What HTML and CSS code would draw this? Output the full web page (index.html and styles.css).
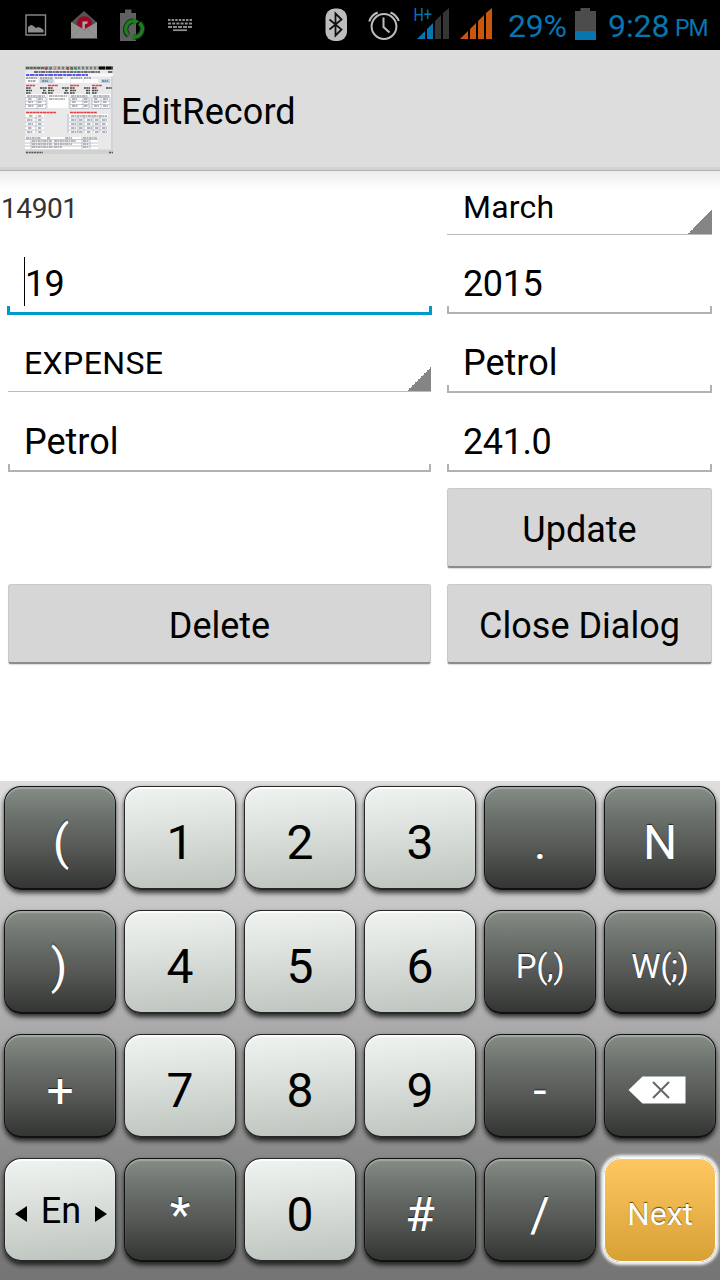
FILE: index.html
```
<!DOCTYPE html>
<html lang="en">
<head>
<meta charset="utf-8">
<title>EditRecord</title>
<link rel="stylesheet" href="styles.css">
</head>
<body>
<div class="screen">
  <header class="status">
    <svg class="status-icons" width="504" height="50" viewBox="0 0 504 50">
      <rect x="26" y="15" width="19.5" height="20" fill="none" stroke="#8c8c8c" stroke-width="1.4"/>
      <path d="M28 32.500v-5.500l2-1.500 2-.5 4 3 2-1 3 1 2.500 2v2.500z" fill="#8c8c8c"/>
      <path d="M71 22.500L84 11l13 11.500v8H71z" fill="#555"/>
      <circle cx="84.500" cy="24" r="7.800" fill="#9c0824"/>
      <path d="M83.600 29v-7.500M83.800 24.500q.2-2.300 3.700-2" fill="none" stroke="#aaa" stroke-width="2.400"/>
      <path d="M71 22l13 7.500L97 22v16.500H71z" fill="#929292"/>
      <path d="M71 38.500l10-11M97 38.500l-10-11" stroke="#858585" stroke-width=".8"/>
      <path d="M120 13h5V9.500h6.500V13h4.500v28h-16z" fill="#606060"/>
      <path d="M128.500 35.500a8.300 8.300 0 0 1 5.500-14.500M139.500 22.500a8.300 8.300 0 0 1-6 14.500" fill="none" stroke="#1b2a1b" stroke-width="5.400"/>
      <path d="M128.500 35a8 8 0 0 1 5.500-14M139.500 23a8 8 0 0 1-6 14" fill="none" stroke="#1d7d1f" stroke-width="3.400"/>
      <path d="M132.500 17.500l7 4-6 3.500zM136 33.500l-6 4 5 2.500z" fill="#1d7d1f"/>
      <g stroke="#8c8c8c" stroke-width="1.800" fill="none">
        <path d="M168 20h24" stroke-dasharray="2.500 1.100"/>
        <path d="M168 23.500h24" stroke-dasharray="3 1.200"/>
        <path d="M168 27h24" stroke-dasharray="4 1"/>
        <path d="M173 30.200h14"/>
      </g>
      <rect x="325.500" y="8.500" width="21.500" height="32.500" rx="9" fill="#bdbdbd"/>
      <path d="M329.500 19.500l12 10-6 6V13.500l6 6-12 10" fill="none" stroke="#111" stroke-width="1.800"/>
      <g fill="none" stroke="#bdbdbd" stroke-width="2">
        <circle cx="384" cy="26.500" r="12.400"/>
        <path d="M383.500 17.500v9.500l6 5.500"/>
        <path d="M369.200 21.500q2-6.500 8.500-9M390.500 12.500q6 2.500 8.300 8.500"/>
      </g>
      <text x="413.500" y="21" class="network" textLength="18.500" lengthAdjust="spacingAndGlyphs">H+</text>
      <path d="M417 39l8-8v8zM427 29l6-6v16h-6z" fill="#0776b0"/>
      <path d="M435 21l6-6v24h-6zM443 13l6-5v31h-6z" fill="#353535"/>
      <path d="M460 39l8-8v8zM470 29l6-6v16h-6zM478 21l6-6v24h-6zM486 13l6-5v31h-6z" fill="#c9560c"/>
    </svg>
    <span class="percent">29%</span>
    <svg class="battery" width="21" height="33" viewBox="0 0 21 33">
      <path d="M0 3h5.500V0h9.500v3h6v29H0z" fill="#4c4c4c"/>
      <path d="M0 23h21v9H0z" fill="#0776b0"/>
    </svg>
    <span class="clock">9:28</span><span class="meridiem">PM</span>
  </header>

  <div class="action-bar">
    <svg class="app-icon" width="88" height="88" viewBox="0 0 88 88">
      <rect width="88" height="88" fill="#e9e9e9"/>
      <rect width="88" height="4" fill="#b9bcb4"/>
      <path d="M1 2h19" stroke="#444" stroke-width="1.500" stroke-dasharray="3 .7"/>
      <path d="M21 2h53" stroke="#777" stroke-width="2.500" stroke-dasharray="2 2"/>
      <path d="M21 1v3M43 1v3" stroke="#d22" stroke-width="1.500"/>
      <path d="M25 1v3M51 1v3" stroke="#28c" stroke-width="1.500"/>
      <path d="M30 1v3" stroke="#e83" stroke-width="2"/><path d="M47 1v3" stroke="#292" stroke-width="2"/>
      <path d="M74 2h14" stroke="#050505" stroke-width="3" stroke-dasharray="6 .7"/>
      <path d="M9 6h66M83 6h5" stroke="#444" stroke-width="1.300" stroke-dasharray="4 .6 2 .5"/>
      <path d="M0 7.500h88v3H0z" fill="#f8f8ff"/>
      <path d="M1 9h62" stroke="#22e" stroke-width="1.600" stroke-dasharray="3 .6 5 .7"/>
      <path d="M1 12h11M15 12h13M30 12h8M46 12h11M59 12h7" stroke="#666" stroke-width="1" stroke-dasharray="2 .5"/>
      <path d="M1 13h12v4H1zM30 13h15v4H30zM46 13h12v4H46zM59 13h14v4H59z" fill="#fff"/>
      <path d="M15 13h13v4H15zM76 13h9v4h-9z" fill="#bdd0df"/>
      <path d="M3 15h8M17 15h6M77 15h6" stroke="#456" stroke-width="1.200" stroke-dasharray="2 .5"/>
      <g fill="#fff"><path d="M1 28h20v15H1zM23 28h20v14H23zM45 28h19v14H45zM67 28h19v14H67zM1 48h18v19H1zM44 48h39v19H44zM0 71h73v12H0z"/></g>
      <path d="M1 19.500h9M23 19.500h10M45 19.500h9M67 19.500h10M1 46.500h30M45 46.500h27" stroke="#e64040" stroke-width="1.300" stroke-dasharray="3 .4"/>
      <path d="M1 22h5M15 22h7M23 22h5M37 22h7M45 22h5M59 22h6M67 22h5M81 22h6M1 24.500h6M18 24.500h3M23 24.500h6M40 24.500h3M45 24.500h6M61 24.500h4M67 24.500h6M1 27h5M17 27h5M23 27h5M39 27h5M45 27h5M61 27h4M67 27h5" stroke="#444" stroke-width="1.300" stroke-dasharray="2 .4"/>
      <path d="M2 30h18M24 30h18M46 30h17M68 30h17M24 33h16M3 33h4M13 33h5M47 33h5M59 33h4M69 33h4M78 33h5M3 36h5M13 36h4M47 36h4M59 36h4M69 36h5M78 36h4M3 40h6M13 40h5M47 40h6M59 40h4M69 40h5M78 40h5M4 50h4M13 50h4M2 54h6M13 54h4M3 58h5M13 58h4M3 62h4M13 62h3M2 66h6M13 66h4M46 50h36M46 54h6M54 54h4M62 54h5M70 54h4M77 54h5M46 58h6M54 58h4M62 58h4M70 58h4M77 58h4M46 62h5M54 62h4M62 62h5M70 62h4M77 62h5M46 66h7M54 66h4M62 66h4M70 66h4M77 66h5M1 72h15M22 72h3M40 72h7M58 72h14M7 75h20M29 75h22M58 75h6M7 78h20M29 78h18M58 78h6M7 81h21M29 81h8M58 81h6" stroke="#6d6d75" stroke-width="1.200" stroke-dasharray="3 .5 1.500 .6"/>
      <path d="M0 31.500h21v11H0zM0 35h21M0 38.500h21M45 31.500h19v11H45zM45 35h19M45 38.500h19M67 31.500h18v11H67zM67 35h18M67 38.500h18M0 52h19M0 56h19M0 60h19M0 64h19M44 52h39M44 56h39M44 60h39M44 64h39M0 73.500h73M0 77h73M0 80h73M12 31v12M58 31v12M76 31v12M11 49v18M53 49v18M59 49v18M68 49v18M75 49v18M57 71v12M65 71v12M6 74v9M87 10v74M43 48v19" fill="none" stroke="#a5afbb" stroke-width=".7"/>
      <rect y="83.500" width="88" height="4.500" fill="#cfd2cf"/>
      <path d="M1 86.500h17M84 86.500h4" stroke="#555" stroke-width="1.500" stroke-dasharray="2 .7"/>
    </svg>
    <h1 class="title">EditRecord</h1>
  </div>

  <main class="form">
    <div class="cell label">14901</div>
    <div class="cell"><div class="spinner march"><span>March</span></div></div>
    <div class="cell"><div class="edit focused"><i class="caret"></i><span>19</span></div></div>
    <div class="cell"><div class="edit year"><span>2015</span></div></div>
    <div class="cell"><div class="spinner"><span class="expense">EXPENSE</span></div></div>
    <div class="cell"><div class="edit"><span>Petrol</span></div></div>
    <div class="cell"><div class="edit"><span>Petrol</span></div></div>
    <div class="cell"><div class="edit year"><span>241.0</span></div></div>
    <div class="cell"></div>
    <div class="cell"><button class="button">Update</button></div>
    <div class="cell"><button class="button">Delete</button></div>
    <div class="cell"><button class="button">Close Dialog</button></div>
  </main>

  <section class="keyboard">
    <div class="key dark paren open">(</div><div class="key">1</div><div class="key">2</div><div class="key">3</div><div class="key dark">.</div><div class="key dark">N</div>
    <div class="key dark paren">)</div><div class="key">4</div><div class="key">5</div><div class="key">6</div><div class="key dark small">P(,)</div><div class="key dark small">W(;)</div>
    <div class="key dark">+</div><div class="key">7</div><div class="key">8</div><div class="key">9</div><div class="key dark">-</div>
    <div class="key dark">
      <svg class="backspace" width="58" height="28" viewBox="0 0 58 28"><path d="M.5 14L14.500.5H57.500v27H14.500z" fill="#fff"/><path d="M25 6l16 16M41 6L25 22" stroke="#666" stroke-width="2"/></svg>
    </div>
    <div class="key lang">
      <svg width="12" height="16" viewBox="0 0 12 16"><path d="M0 8L12 0v16z"/></svg>
      <span>En</span>
      <svg width="12" height="16" viewBox="0 0 12 16"><path d="M12 8L0 0v16z"/></svg>
    </div>
    <div class="key dark">*</div><div class="key">0</div><div class="key dark">#</div><div class="key dark">/</div><div class="key next">Next</div>
  </section>
</div>
</body>
</html>
```

FILE: styles.css
```
* { box-sizing: border-box; }
body { margin: 0; background: #fff; font-family: Roboto, "Noto Sans", sans-serif; color: #000; }
.screen { width: 720px; height: 1280px; display: flex; flex-direction: column; overflow: hidden; }

.status { height: 50px; flex: none; display: flex; background: #000; color: #0776b0; line-height: 53px; white-space: nowrap; }
.status-icons { flex: none; }
.network { font-size: 18px; fill: #0776b0; }
.percent { width: 71px; flex: none; padding-left: 4px; font-size: 32px; letter-spacing: -0.2px; }
.battery { flex: none; margin-top: 8px; }
.clock { width: 79px; flex: none; padding-left: 12px; font-size: 32px; letter-spacing: -0.1px; }
.meridiem { font-size: 23px; line-height: 58px; letter-spacing: -0.9px; }

.action-bar { height: 121px; flex: none; display: flex; align-items: center; gap: 8px; padding: 0 25px 1px; background: #ddd; border-bottom: 1px solid #b2b2b2; box-shadow: inset 0 -3px #d3d3d3; }
.app-icon { flex: none; }
.title { margin: 4px 0 0; font-size: 36px; font-weight: 400; line-height: 44px; letter-spacing: 0.1px; }

.form { height: 610px; flex: none; display: grid; grid-template-columns: 439px 281px; grid-template-rows: 72px 79px 79px 79px 96px 96px; align-content: start; background: linear-gradient(#ececec, #fff 18px); }
.cell { padding: 8px; }
.cell.label { padding: 19px 0 0 1px; font-size: 28px; line-height: 38px; letter-spacing: -0.4px; color: #333; }
.spinner, .edit { display: flex; height: 63px; padding-left: 16px; }
.spinner { height: 62px; font-size: 32px; line-height: 67px; border-bottom: 1px solid #bbb; background: linear-gradient(135deg, transparent 50%, #858585 50%) right bottom / 24px 24px no-repeat; }
.spinner.march { height: 56px; line-height: 57px; letter-spacing: 0.2px; }
.expense { letter-spacing: 0.4px; }
.edit { font-size: 36px; line-height: 66px; background: linear-gradient(#b2b2b2, #b2b2b2) left bottom / 2px 8px no-repeat, linear-gradient(#b2b2b2, #b2b2b2) right bottom / 2px 8px no-repeat, linear-gradient(#b2b2b2, #b2b2b2) left bottom / 100% 2px no-repeat; }
.edit.year { letter-spacing: -0.4px; }
.edit.focused { height: 64px; margin: 0 -1px; padding-left: 17px; letter-spacing: -0.7px; background: linear-gradient(#0099cc, #0099cc) left bottom / 3px 9px no-repeat, linear-gradient(#0099cc, #0099cc) right bottom / 3px 9px no-repeat, linear-gradient(#0099cc, #0099cc) left bottom / 100% 3px no-repeat; }
.caret { width: 1px; height: 49px; margin-top: 6px; background: #000; }
.button { display: block; width: 100%; height: 80px; padding: 4px 0 0; border: 1px solid #c9c9c9; border-bottom: 2px solid #8c8c8c; border-radius: 3px; background: #d6d6d6; font: 36px/42px Roboto, sans-serif; color: #000; box-shadow: 0 1px 1px #ddd; }

.keyboard { flex: 1; display: grid; grid-template-columns: repeat(6, 112px); grid-template-rows: repeat(4, 104px); gap: 20px 8px; padding: 5px 4px 0; background: linear-gradient(#dedede, #c4c4c4 27%, #ababab 49%, #8a8a8a 74%, #747474); }
.key { display: flex; align-items: center; justify-content: center; padding-top: 11px; border: 1px solid #282828; border-bottom-width: 2px; border-radius: 17px; background: linear-gradient(175deg, #f0f4f1, #dfe4e0 35%, #bdc3bd); font-size: 48px; line-height: 56px; box-shadow: inset 0 2px 1px #fff, 0 3px 5px rgba(0,0,0,.75); }
.key.dark { border-color: #111; background: linear-gradient(#858d86, #6c726d 28%, #555754 62%, #333533); color: #fff; text-shadow: 0 -1px 1px #222; box-shadow: inset 0 2px 1px #a2aaa4, 0 3px 5px rgba(0,0,0,.75); }
.key.paren { padding-right: 2px; }
.key.open { padding: 11px 0 0 2px; }
.key.small { font-size: 33px; letter-spacing: -0.4px; }
.backspace { margin: -2px 6px 0 0; }
.key.lang { justify-content: space-between; padding: 11px 8px 0 10px; padding-top: 2px; font-size: 36px; }
.lang svg { margin-top: 7px; }
.key.next { padding-top: 7px; border: 1px solid #fff; background: linear-gradient(#ffc760, #edb64e 45%, #d8a135); color: #fff; font-size: 32px; text-shadow: 0 -1px 1px #604000; box-shadow: 0 0 3px 3px #f4f4f4; }
```
